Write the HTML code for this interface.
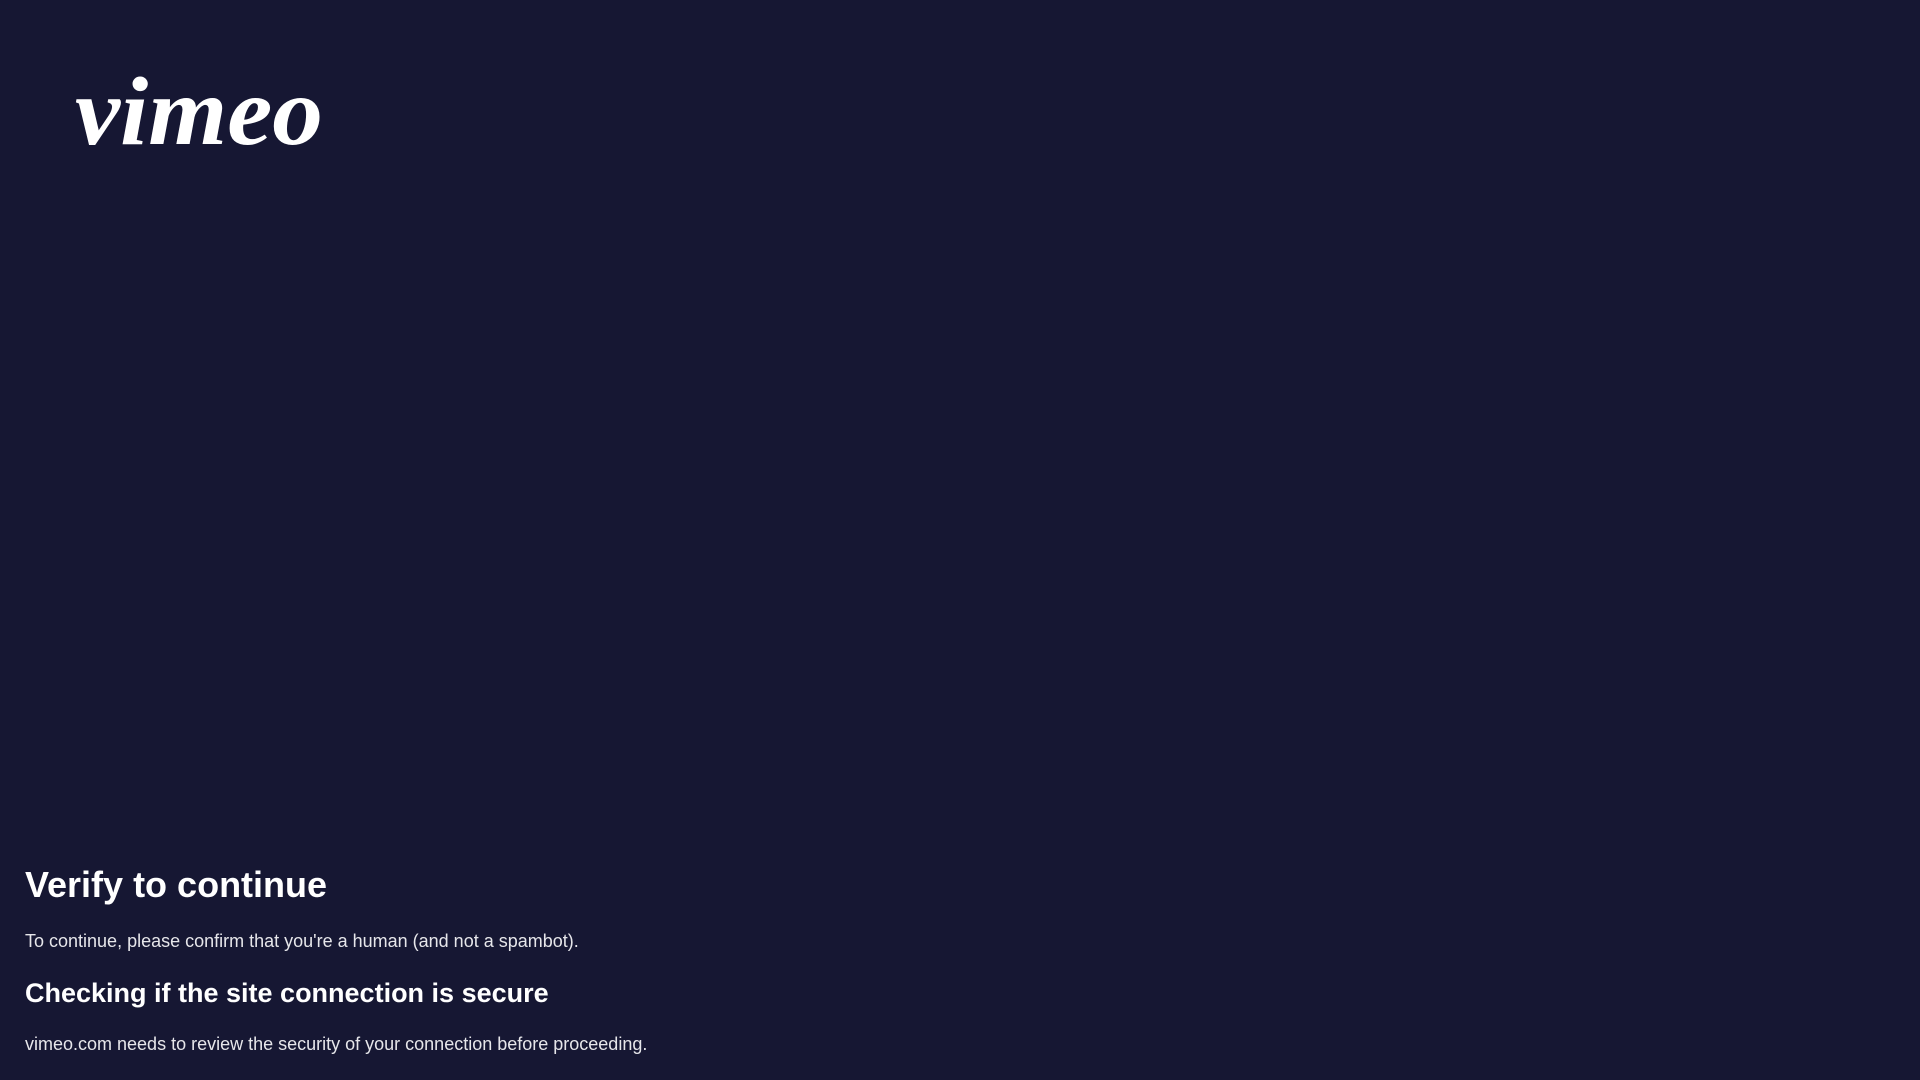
<!DOCTYPE html>
<html><head><meta charset="utf-8"><style>
html,body{margin:0;padding:0;width:1920px;height:1080px;background:#161733;overflow:hidden;font-family:"Liberation Sans",Arial,sans-serif;color:#fff}
.logo{position:absolute;left:72px;top:60px}
h1{position:absolute;left:25px;top:861px;margin:0;font-size:36px;font-weight:bold;line-height:48px}
.p1{position:absolute;left:25px;top:929px;margin:0;font-size:18px;line-height:24px;color:#e6e6ea}
h2{position:absolute;left:25px;top:976px;margin:0;font-size:27px;font-weight:bold;line-height:34px}
.p2{position:absolute;left:25px;top:1032px;margin:0;font-size:18px;line-height:24px;color:#e6e6ea}
</style></head><body>
<svg class="logo" width="270" height="100" viewBox="0 0 270 100">
<text x="3" y="84" font-family="Liberation Serif, serif" font-style="italic" font-weight="bold" font-size="98" fill="#fff" textLength="248" lengthAdjust="spacingAndGlyphs">vimeo</text>
</svg>
<h1>Verify to continue</h1>
<p class="p1">To continue, please confirm that you're a human (and not a spambot).</p>
<h2>Checking if the site connection is secure</h2>
<p class="p2">vimeo.com needs to review the security of your connection before proceeding.</p>
</body></html>
